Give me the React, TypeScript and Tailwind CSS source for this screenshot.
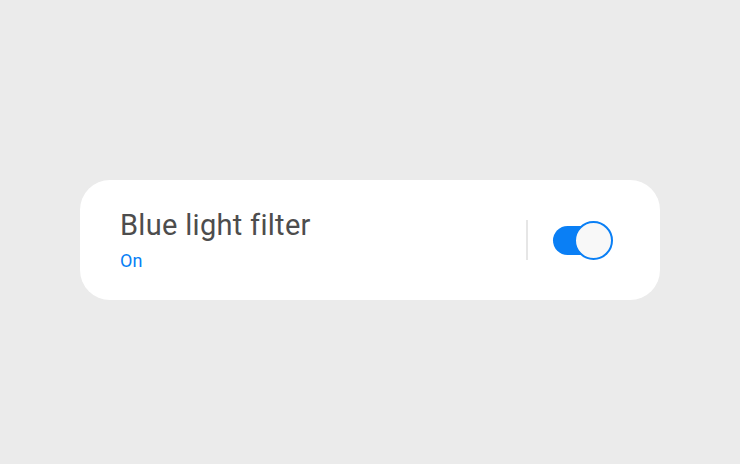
export default function App() {
  return (
    <div className="flex h-[464px] w-[740px] items-center justify-center bg-[#ebebeb] pt-4 font-['Roboto',sans-serif]">
      <div className="flex h-[120px] w-[580px] items-center rounded-[30px] bg-white pl-10 pr-[47px]">
        {/* Label */}
        <div className="flex flex-1 flex-col gap-[8px]">
          <span className="text-[29px] leading-[34px] tracking-[0.3px] text-[#4d4d4d]">Blue light filter</span>
          <span className="text-[18px] leading-[22px] text-[#0a7ff5]">On</span>
        </div>

        {/* Divider + switch */}
        <div className="h-10 w-[2px] bg-[#e6e6e6]" />
        <div className="relative ml-[25px] h-[39px] w-[60px]">
          <div className="absolute left-0 top-[5px] h-[29px] w-[45px] rounded-full bg-[#0a7ff5]" />
          <div className="absolute right-0 top-0 h-[39px] w-[39px] rounded-full border-2 border-[#0a7ff5] bg-[#f8f8f8]" />
        </div>
      </div>
    </div>
  );
}
